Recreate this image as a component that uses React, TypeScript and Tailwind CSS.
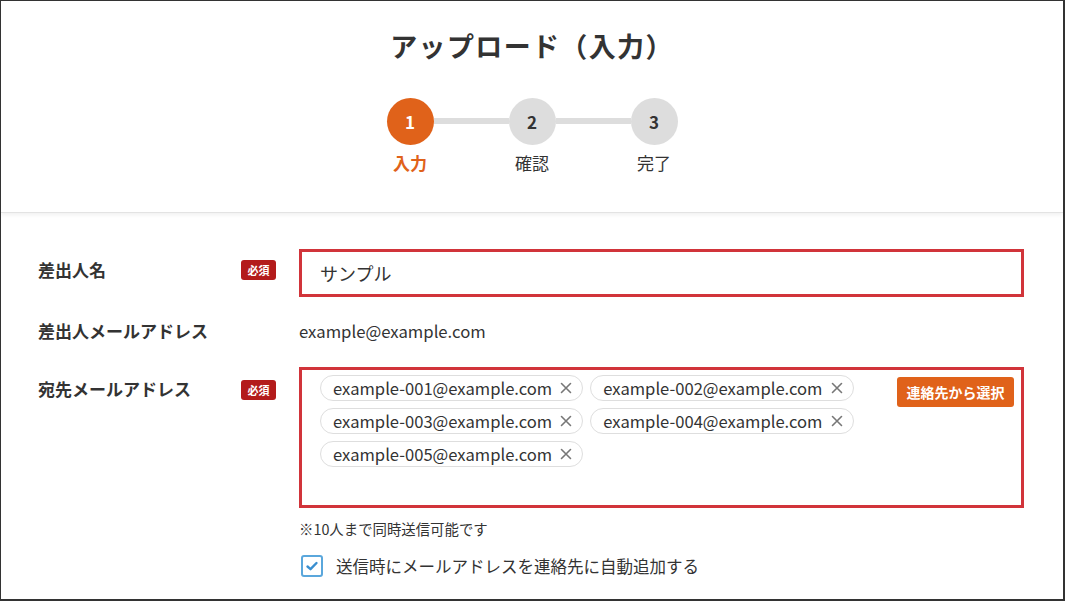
import React from "react";

const emails = [
  "example-001@example.com",
  "example-002@example.com",
  "example-003@example.com",
  "example-004@example.com",
  "example-005@example.com",
];

const steps = [
  { no: "1", label: "入力", active: true },
  { no: "2", label: "確認", active: false },
  { no: "3", label: "完了", active: false },
];

const Required: React.FC = () => (
  <span className="inline-flex h-[20px] w-[35px] items-center justify-center rounded-[3px] bg-[#b31b1b] text-[11px] font-bold leading-none text-white">
    必須
  </span>
);

const App: React.FC = () => {
  return (
    <div
      className="h-[601px] w-[1065px] overflow-hidden border border-r-2 border-b-2 border-[#333] bg-white text-[#333]"
      style={{ fontFamily: '"Noto Sans CJK JP", "Noto Sans", sans-serif' }}
    >
      {/* header */}
      <div className="flex h-[212px] flex-col items-center border-b border-[#e3e3e3] pt-[27px] shadow-[0_2px_4px_rgba(0,0,0,0.06)]">
        <h1 className="text-[27px] font-bold leading-[36px] tracking-[0.05em]">
          アップロード（入力）
        </h1>
        <div className="mt-[34px] flex items-start">
          {steps.map((s, i) => (
            <React.Fragment key={s.no}>
              {i > 0 && <div className="mt-[20px] h-[6px] w-[75px] bg-[#dddddd]" />}
              <div className="flex w-[47px] flex-col items-center">
                <div
                  className={
                    s.active
                      ? "flex h-[47px] w-[47px] items-center justify-center rounded-full bg-[#e0621a] text-[17px] font-bold text-white"
                      : "flex h-[47px] w-[47px] items-center justify-center rounded-full bg-[#dddddd] text-[17px] font-bold text-[#333]"
                  }
                >
                  {s.no}
                </div>
                <div
                  className={
                    s.active
                      ? "mt-[6px] whitespace-nowrap text-[17px] font-bold leading-[24px] text-[#e0621a]"
                      : "mt-[6px] whitespace-nowrap text-[17px] leading-[24px] text-[#333]"
                  }
                >
                  {s.label}
                </div>
              </div>
            </React.Fragment>
          ))}
        </div>
      </div>

      {/* form */}
      <div className="pl-[37px] pt-[36px]">
        <div className="flex items-start">
          <div className="mt-[9px] w-[203px] text-[17px] font-bold leading-[24px]">差出人名</div>
          <div className="mt-[11px] flex w-[58px]">
            <Required />
          </div>
          <div className="flex h-[48px] w-[725px] items-center border-[3px] border-[#d1343a] pl-[18px] text-[18px]">
            サンプル
          </div>
        </div>

        <div className="mt-[22px] flex items-center">
          <div className="w-[261px] text-[17px] font-bold leading-[24px]">差出人メールアドレス</div>
          <div className="text-[16.7px] leading-[24px]">example@example.com</div>
        </div>

        <div className="mt-[24px] flex items-start">
          <div className="mt-[10px] w-[203px] text-[17px] font-bold leading-[24px]">宛先メールアドレス</div>
          <div className="mt-[13px] flex w-[58px]">
            <Required />
          </div>
          <div className="w-[725px]">
            <div className="flex h-[141px] items-start border-[3px] border-[#d1343a] pl-[18px] pr-[7px] pt-[5px]">
              <div className="flex flex-1 flex-wrap gap-x-[7px] gap-y-[7px]">
                {emails.map((e) => (
                  <div
                    key={e}
                    className="flex h-[26px] items-center rounded-full border border-[#dedede] pl-[12px] pr-[10px] text-[16.6px]"
                  >
                    <span>{e}</span>
                    <svg
                      className="ml-[8px]"
                      width="12"
                      height="12"
                      viewBox="0 0 12 12"
                      stroke="#777"
                      strokeWidth="1.6"
                      strokeLinecap="round"
                    >
                      <path d="M1.5 1.5 10.5 10.5M10.5 1.5 1.5 10.5" />
                    </svg>
                  </div>
                ))}
              </div>
              <button className="mt-[2px] h-[30px] w-[117px] rounded-[3px] bg-[#e0621a] text-[14px] font-bold text-white">
                連絡先から選択
              </button>
            </div>
            <div className="mt-[11px] text-[14.4px] leading-[20px]">※10人まで同時送信可能です</div>
            <div className="mt-[15px] flex items-center">
              <div className="ml-[2px] flex h-[22px] w-[22px] items-center justify-center rounded-[3px] border-2 border-[#5aa7dc]">
                <svg width="14" height="14" viewBox="0 0 14 14" fill="none" stroke="#3a8fd0" strokeWidth="2.4" strokeLinecap="round" strokeLinejoin="round">
                  <path d="M2.5 7.5 5.5 10.2 11.5 4" />
                </svg>
              </div>
              <span className="ml-[13px] text-[16.5px]">送信時にメールアドレスを連絡先に自動追加する</span>
            </div>
          </div>
        </div>
      </div>
    </div>
  );
};

export default App;
